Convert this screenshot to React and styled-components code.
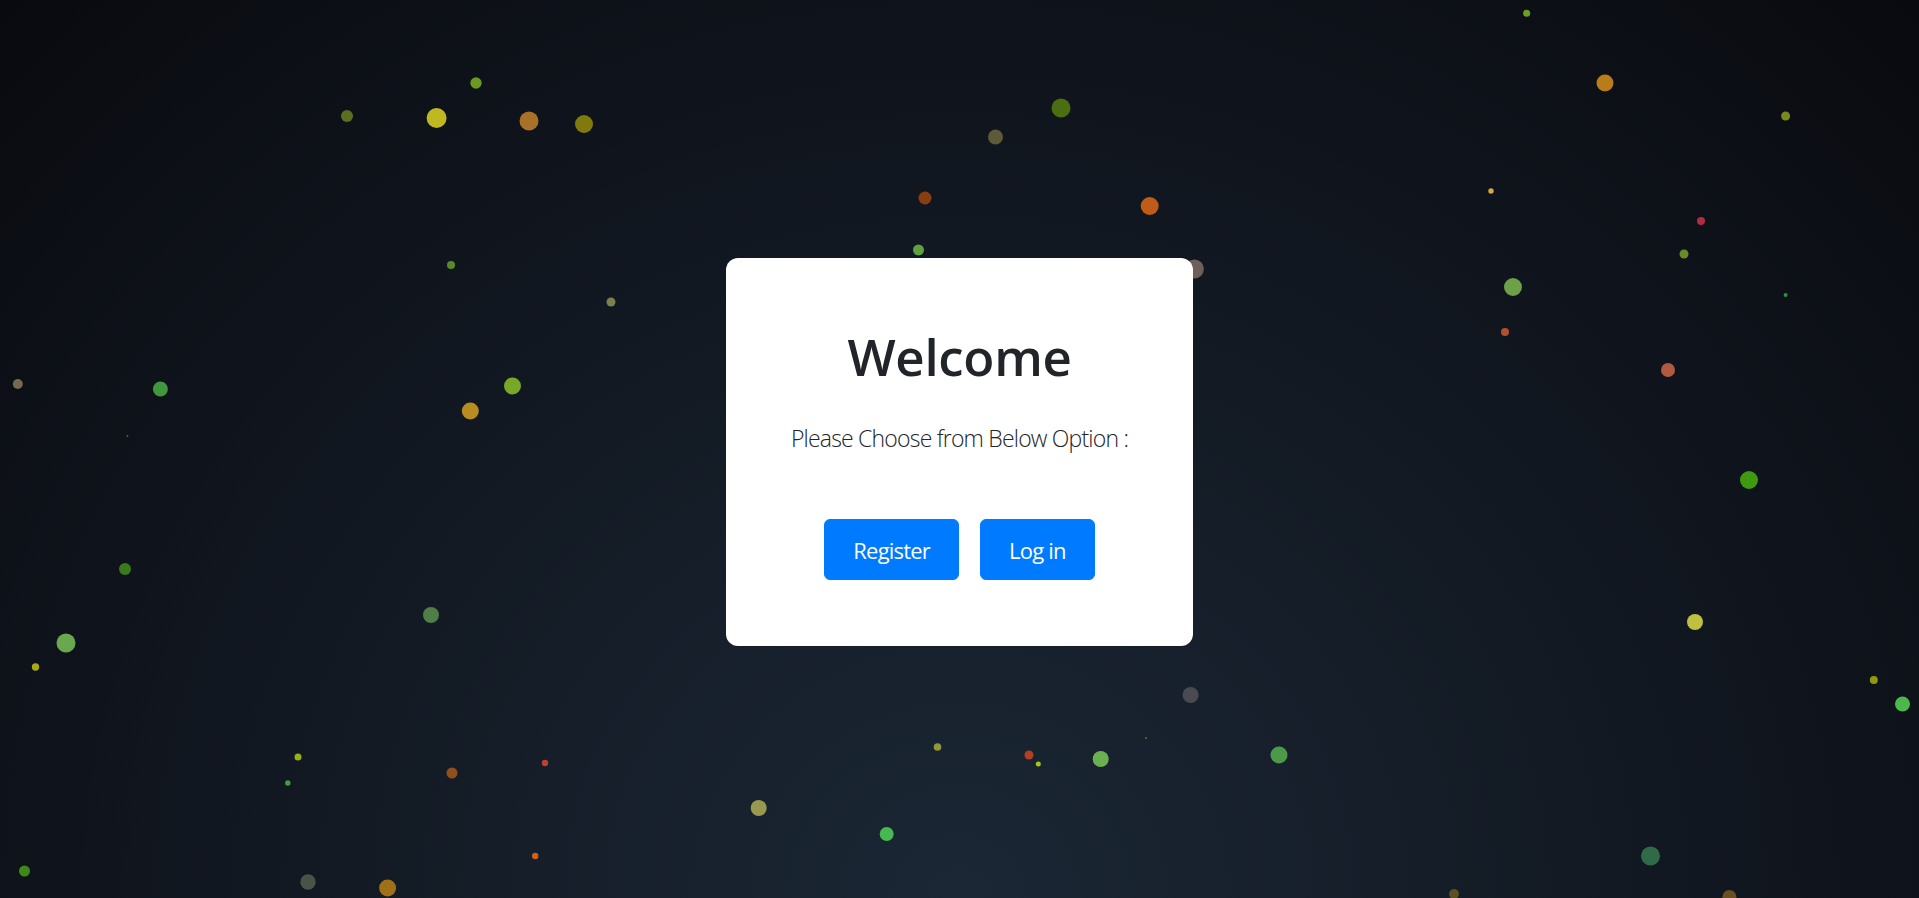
import React from "react";
import styled, { createGlobalStyle } from "styled-components";

const GlobalStyle = createGlobalStyle`
  *, *::before, *::after { box-sizing: border-box; }
  html, body { margin: 0; padding: 0; height: 100%; }
  body {
    font-family: "Open Sans", "Noto Sans", "Liberation Sans", sans-serif;
    color: #212529;
    background: #090a0f;
  }
`;

const Page = styled.main`
  position: relative;
  min-height: 100vh;
  display: flex;
  align-items: center;
  justify-content: center;
  padding-top: 6px;
  overflow: hidden;
  background: radial-gradient(ellipse at bottom, #1b2735 0%, #090a0f 100%);
`;

const Particles = styled.svg`
  position: absolute;
  inset: 0;
  width: 100%;
  height: 100%;
  z-index: 0;
  pointer-events: none;
`;

const Card = styled.section`
  position: relative;
  z-index: 1;
  width: 467px;
  padding: 67px 0 66px;
  background: #ffffff;
  border-radius: 12px;
  box-shadow: 0 1px 0 rgba(0, 0, 0, 0.08);
  display: flex;
  flex-direction: column;
  align-items: center;
  text-align: center;
`;

const Title = styled.h1`
  margin: 0;
  font-size: 51px;
  line-height: 62px;
  font-weight: 600;
  letter-spacing: -0.3px;
  color: #212529;
`;

const Lead = styled.p`
  margin: 33px 0 0;
  font-size: 23px;
  line-height: 36px;
  font-weight: 300;
  letter-spacing: -0.8px;
  color: #212529;
`;

const Actions = styled.div`
  margin-top: 63px;
  display: flex;
  gap: 21px;
`;

const Button = styled.button`
  height: 61px;
  padding: 0 28px;
  border: 1px solid #007bff;
  border-radius: 6px;
  background: #007bff;
  color: #ffffff;
  font-family: inherit;
  font-size: 22px;
  font-weight: 400;
  letter-spacing: -0.8px;
  line-height: 1;
  cursor: pointer;
`;

const dots = [
  [1526.7, 13.3, 3.5, "#6aa020"],
  [1605, 83, 8.5, "#b87c18"],
  [1785.6, 116, 4.5, "#7a8a18"],
  [476, 83, 5.7, "#6a9a20"],
  [347, 116, 6, "#5a7020"],
  [436.6, 118, 10, "#c0b820"],
  [529, 121, 9.5, "#a87028"],
  [584, 124, 9, "#807a0c"],
  [1061, 108, 9.5, "#4a6e10"],
  [995.5, 137, 7.5, "#5c5a38"],
  [925, 198, 6.5, "#8a3e10"],
  [1149.7, 206, 9, "#c05c18"],
  [1491, 191, 2.7, "#d8a848"],
  [1701, 221, 4, "#b02c40"],
  [918.5, 250, 5.5, "#60a040"],
  [1194.4, 269, 9.5, "#6e6058"],
  [451, 265, 4, "#5a8a28"],
  [1684, 254, 4.5, "#6a8a2a"],
  [1513, 287, 9, "#6ea048"],
  [1785.6, 295, 2, "#309040"],
  [611, 302, 4.5, "#7a8050"],
  [1505, 332, 4, "#b05030"],
  [17.8, 384, 5, "#786850"],
  [160.4, 389, 7.5, "#40983c"],
  [512.5, 386, 8.5, "#78a828"],
  [1668, 370, 7, "#b05a40"],
  [470.3, 411, 8.5, "#b88c20"],
  [127.4, 436, 1, "#a04010"],
  [1749, 480, 9, "#409a10"],
  [125, 569, 6, "#3a7a18"],
  [431, 615, 8, "#507e48"],
  [66, 643, 9.5, "#6aa850"],
  [35.5, 667, 3.7, "#a8a818"],
  [1695, 622, 8, "#c0c040"],
  [1190.6, 695, 8, "#4a4a52"],
  [1873.8, 680, 4, "#909810"],
  [1902.5, 704, 7.5, "#4cb84c"],
  [937.5, 747, 3.8, "#909838"],
  [1146, 738, 1, "#4a7a10"],
  [1029, 755, 4.5, "#b04020"],
  [1038.3, 764, 2.5, "#a8c818"],
  [1100.7, 759, 8, "#6ab050"],
  [1279, 755, 8.5, "#4c9a48"],
  [298, 757, 3.5, "#98b018"],
  [287.8, 783, 2.7, "#40a040"],
  [452, 773, 5.5, "#90501c"],
  [545, 763, 3.2, "#c04030"],
  [758.7, 808, 8, "#989850"],
  [886.7, 834, 7, "#48b850"],
  [535.2, 856, 3.2, "#d06018"],
  [24.5, 871, 5.5, "#3e8a18"],
  [308, 882, 7.7, "#485448"],
  [387.6, 888, 8.5, "#a07018"],
  [1650.5, 856, 9.5, "#306a48"],
  [1454, 894, 5, "#5a5020"],
  [1729.4, 897, 7, "#6a5020"],
];

export default function App() {
  return (
    <>
      <GlobalStyle />
      <Page>
        <Particles viewBox="0 0 1919 898" preserveAspectRatio="xMidYMid slice" aria-hidden="true">
          {dots.map(([cx, cy, r, fill], i) => (
            <circle key={i} cx={cx} cy={cy} r={r} fill={fill} />
          ))}
        </Particles>
        <Card>
          <Title>Welcome</Title>
          <Lead>Please Choose from Below Option :</Lead>
          <Actions>
            <Button type="button">Register</Button>
            <Button type="button">Log in</Button>
          </Actions>
        </Card>
      </Page>
    </>
  );
}
